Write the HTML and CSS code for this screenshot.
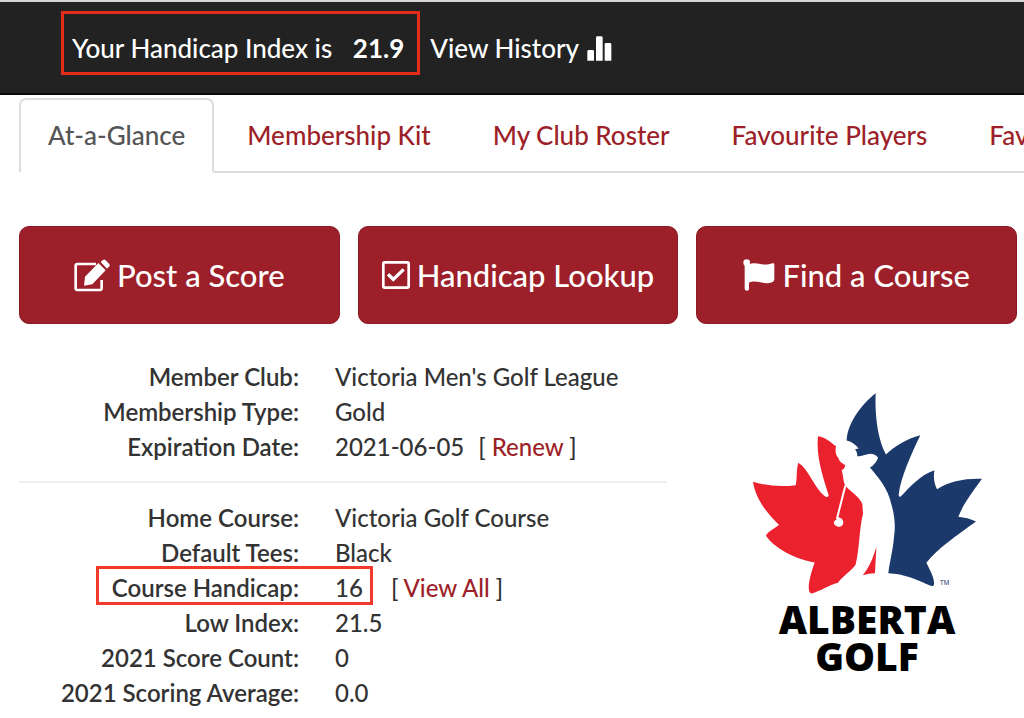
FILE: index.html
```html
<!DOCTYPE html>
<html lang="en">
<head>
    <meta charset="UTF-8">
    <meta name="viewport" content="width=device-width, initial-scale=1.0">
    <title>Alberta Golf - My Account</title>
    <link rel="stylesheet" href="styles.css">
</head>
<body>
    <header class="navbar">
        <div class="index-box">Your Handicap Index is <strong>21.9</strong></div>
        <a class="history" href="#history">View History
            <svg class="icon-bars" viewBox="0 0 75 75" aria-hidden="true">
                <path d="M1 74V46q0-4 4-4h12q4 0 4 4v28zM27 74V5q0-4 4-4h12q4 0 4 4v69zM53 74V25q0-4 4-4h12q4 0 4 4v49z"/>
            </svg>
        </a>
    </header>

    <nav class="tabs">
        <a class="tab active" href="#glance">At-a-Glance</a>
        <a class="tab" href="#kit">Membership Kit</a>
        <a class="tab" href="#roster">My Club Roster</a>
        <a class="tab" href="#players">Favourite Players</a>
        <a class="tab" href="#courses">Favourite Courses</a>
    </nav>

    <main class="content">
        <div class="actions">
            <button class="btn" type="button">
                <svg class="icon-edit" viewBox="0 0 108 99" aria-hidden="true">
                    <path class="line" d="M66 15H10q-5 0-5 5v68q0 5 5 5h68q5 0 5-5V63"/>
                    <path d="M30 80l3-27 40-41 22 22-40 42zM80 9l7-6q4-3 8 1l10 10q4 4 1 8l-7 7z"/>
                </svg>
                Post a Score
            </button>
            <button class="btn" type="button">
                <svg class="icon-check" viewBox="0 0 84 84" aria-hidden="true">
                    <rect class="line" x="4" y="4" width="76" height="76" rx="4"/>
                    <path class="tick" d="M18 40l16 15 31-30"/>
                </svg>
                Handicap Lookup
            </button>
            <button class="btn" type="button">
                <svg class="icon-flag" viewBox="0 0 96 96" aria-hidden="true">
                    <circle cx="11" cy="11" r="10"/>
                    <path d="M5 11h13v79q0 5-6 5t-7-5zM18 16c26-10 39 8 71-3q5-1 5 4v44q0 5-4 7c-28 14-44-8-72 3z"/>
                </svg>
                Find a Course
            </button>
        </div>

        <div class="overview">
            <div class="details">
                <dl>
                    <div class="row"><dt>Member Club:</dt><dd>Victoria Men's Golf League</dd></div>
                    <div class="row"><dt>Membership Type:</dt><dd>Gold</dd></div>
                    <div class="row"><dt>Expiration Date:</dt><dd>2021-06-05 <span class="extra">[ <a href="#renew">Renew</a> ]</span></dd></div>
                </dl>
                <hr>
                <dl>
                    <div class="row"><dt>Home Course:</dt><dd>Victoria Golf Course</dd></div>
                    <div class="row"><dt>Default Tees:</dt><dd>Black</dd></div>
                    <div class="row marked"><dt>Course Handicap:</dt><dd>16 <span class="extra wide">[ <a href="#all">View All</a> ]</span></dd></div>
                    <div class="row"><dt>Low Index:</dt><dd>21.5</dd></div>
                    <div class="row"><dt>2021 Score Count:</dt><dd>0</dd></div>
                    <div class="row"><dt>2021 Scoring Average:</dt><dd>0.0</dd></div>
                </dl>
            </div>

            <aside class="logo">
                <svg class="leaf" viewBox="34 36 693 608" aria-hidden="true">
                    <path class="red" d="M232 168C255 171 270 186 286 198C283 212 285 225 293 233C295 244 305 250 314 255C312 264 308 267 303 270C308 285 307 302 313 315C330 335 358 350 365 372L367 400C355 450 357 505 345 553C335 570 303 590 292 608C265 615 240 633 213 640C198 638 203 600 222 547C180 540 110 515 76 467C82 452 102 447 115 434C85 405 45 360 37 305C80 318 125 320 165 315C170 295 166 270 173 248C206 268 220 325 255 350Q264 352 264 345C250 300 225 230 232 168Z"/>
                    <path class="red" d="M407 500L403 579Q384 579 366 585C388 560 398 530 407 500Z"/>
                    <path class="blue" d="M405 39C360 75 320 130 318 181C332 184 343 192 354 205L343 207C348 213 350 220 350 228C365 230 375 222 390 221C402 222 410 228 412 233C408 245 398 258 388 262C410 290 442 322 452 372C462 405 465 440 460 470C457 510 448 540 443 579C490 580 532 600 570 617Q580 620 580 612C582 595 568 570 557 548C590 505 650 465 706 424C690 416 670 412 653 410C668 370 700 330 724 296C675 294 625 303 589 327C580 310 578 290 581 270C538 285 508 320 480 349Q474 352 474 344C480 290 515 215 539 165C500 175 458 200 436 223C412 180 402 110 405 39Z"/>
                    <path class="club" d="M314 317L289 415"/>
                    <path class="club-head" d="M287 412C295 408 308 415 308 428C307 441 294 443 286 437C278 433 277 423 287 419Z"/>
                    <text class="tm" x="597" y="616">TM</text>
                </svg>
                <div class="wordmark">ALBERTA<br>GOLF</div>
            </aside>
        </div>
    </main>
</body>
</html>
```
FILE: styles.css
```css
*,
*::after {
    box-sizing: border-box;
}
body {
    margin: 0;
    font-family: 'Lato', sans-serif;
    font-size: 24px;
    font-weight: 500;
    line-height: 35px;
    color: #333;
    background-color: white;
    overflow-x: hidden;
}
a {
    color: #9d1f29;
    text-decoration: none;
}

/* top bar */
.navbar {
    display: flex;
    align-items: center;
    gap: 10px;
    height: 95px;
    padding: 0 61px 10px;
    background-color: #222;
    border-top: 2px solid #d4d6d7;
    border-bottom: 2px solid #090909;
    color: white;
    font-size: 26px;
    white-space: nowrap;
}
.index-box {
    height: 64px;
    padding: 0 13px 0 8px;
    border: 3px solid #e62b1b;
    line-height: 68px;
}
.index-box strong {
    margin-left: 14px;
}
.history {
    display: flex;
    align-items: center;
    gap: 8px;
    padding-top: 11px;
    color: white;
}
.icon-bars {
    width: 25px;
    height: 25px;
    fill: white;
}

/* tabs */
.tabs {
    display: flex;
    margin: 3px 0 0 19px;
    overflow: hidden;
    white-space: nowrap;
    font-size: 26px;
    box-shadow: inset 0 -2px #ddd;
}
.tab {
    height: 75px;
    margin-right: 4px;
    padding: 0 27px;
    border: 2px solid transparent;
    line-height: 71px;
}
.tab.active {
    color: #555;
    background-color: white;
    border-color: #ddd;
    border-bottom-color: white;
    border-radius: 7px 7px 0 0;
}

/* buttons */
.content {
    padding: 53px 7px 0 19px;
}
.actions {
    display: grid;
    grid-template-columns: repeat(3, 1fr);
    gap: 18px;
}
.btn {
    display: flex;
    align-items: center;
    justify-content: center;
    gap: 7px;
    height: 98px;
    padding: 0;
    background-color: #9d1f29;
    border: 1px solid #8a1b24;
    border-radius: 10px;
    color: white;
    font-family: inherit;
    font-size: 31px;
    font-weight: 500;
    cursor: pointer;
    white-space: nowrap;
}
.btn svg {
    fill: white;
}
.btn .line,
.btn .tick {
    fill: none;
    stroke: white;
    stroke-width: 8;
}
.btn .tick {
    stroke-width: 10;
}
.icon-edit {
    width: 36px;
    height: 33px;
}
.icon-check {
    width: 28px;
    height: 28px;
}
.icon-flag {
    width: 32px;
    height: 32px;
}

/* member details */
.overview {
    display: grid;
    grid-template-columns: 648fr 298fr;
    gap: 52px;
    padding-top: 35px;
}
dl {
    margin: 0;
}
.row {
    display: flex;
    gap: 36px;
    position: relative;
}
dt {
    width: 280px;
    text-align: right;
    font-weight: 600;
}
dd {
    margin: 0;
}
.extra {
    margin-left: 8px;
}
.extra.wide {
    margin-left: 22px;
}
hr {
    margin: 17px 0;
    border: none;
    border-top: 2px solid #eee;
}
.marked::after {
    content: "";
    position: absolute;
    top: -4px;
    left: 77px;
    width: 277px;
    height: 39px;
    border: 3px solid #f23a2a;
}

/* logo */
.logo {
    display: flex;
    flex-direction: column;
    align-items: center;
    padding: 33px 2px 0 0;
}
.leaf {
    width: 231px;
    height: 203px;
}
.red {
    fill: #eb212e;
}
.blue {
    fill: #1b3a6b;
}
.club {
    stroke: white;
    stroke-width: 6;
}
.club-head {
    fill: white;
}
.tm {
    font-family: 'Liberation Sans', sans-serif;
    font-size: 20px;
    fill: #1b3a6b;
}
.wordmark {
    margin-top: 5px;
    font-family: 'Open Sans', sans-serif;
    font-weight: 800;
    font-size: 39px;
    line-height: 37px;
    text-align: center;
    color: black;
}
```
